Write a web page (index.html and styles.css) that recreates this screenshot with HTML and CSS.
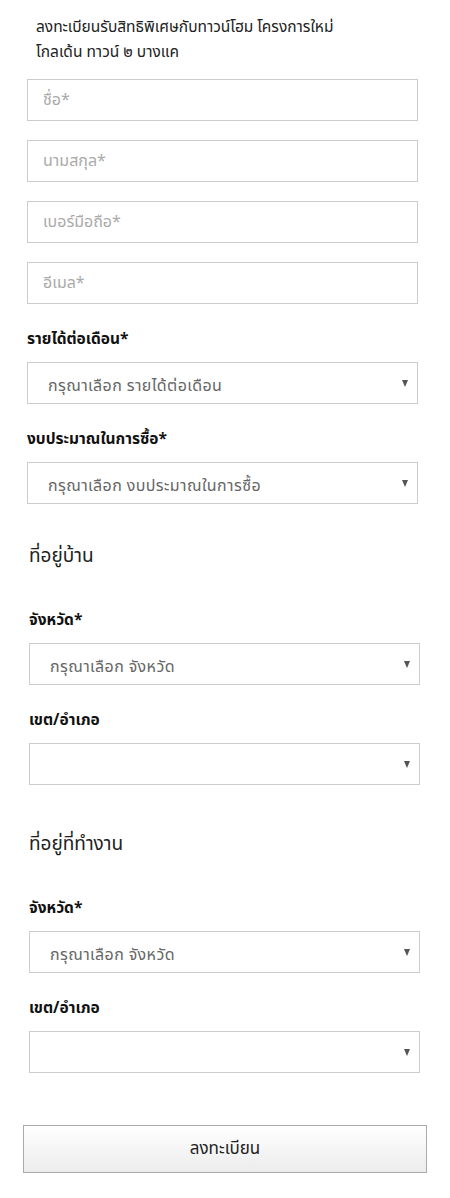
FILE: index.html
```html
<!DOCTYPE html>
<html lang="th">
<head>
    <meta charset="UTF-8">
    <meta name="viewport" content="width=device-width, initial-scale=1.0">
    <title>ลงทะเบียน</title>
    <link rel="stylesheet" href="styles.css">
</head>
<body>
    <div class="register">
        <p class="register-title">ลงทะเบียนรับสิทธิพิเศษกับทาวน์โฮม โครงการใหม่<br>โกลเด้น ทาวน์ ๒ บางแค</p>

        <form id="registerForm">
            <input class="field" type="text" name="name" placeholder="ชื่อ*">
            <input class="field" type="text" name="surname" placeholder="นามสกุล*">
            <input class="field" type="text" name="phone" placeholder="เบอร์มือถือ*">
            <input class="field" type="text" name="email" placeholder="อีเมล*">

            <label class="field-label" for="income">รายได้ต่อเดือน*</label>
            <div class="select-wrap">
                <select id="income" name="income">
                    <option>กรุณาเลือก รายได้ต่อเดือน</option>
                </select>
            </div>

            <label class="field-label" for="budget">งบประมาณในการซื้อ*</label>
            <div class="select-wrap">
                <select id="budget" name="budget">
                    <option>กรุณาเลือก งบประมาณในการซื้อ</option>
                </select>
            </div>

            <div class="address home">
                <h3>ที่อยู่บ้าน</h3>
                <label class="field-label" for="homeProvince">จังหวัด*</label>
                <div class="select-wrap">
                    <select id="homeProvince" name="homeProvince">
                        <option>กรุณาเลือก จังหวัด</option>
                    </select>
                </div>
                <label class="field-label" for="homeDistrict">เขต/อำเภอ</label>
                <div class="select-wrap">
                    <select id="homeDistrict" name="homeDistrict">
                        <option></option>
                    </select>
                </div>
            </div>

            <div class="address work">
                <h3>ที่อยู่ที่ทำงาน</h3>
                <label class="field-label" for="workProvince">จังหวัด*</label>
                <div class="select-wrap">
                    <select id="workProvince" name="workProvince">
                        <option>กรุณาเลือก จังหวัด</option>
                    </select>
                </div>
                <label class="field-label" for="workDistrict">เขต/อำเภอ</label>
                <div class="select-wrap">
                    <select id="workDistrict" name="workDistrict">
                        <option></option>
                    </select>
                </div>
            </div>

            <button type="submit">ลงทะเบียน</button>
        </form>
    </div>
</body>
</html>
```

FILE: styles.css
```css
body {
    margin: 0;
    background: #fff;
    color: #222;
    font-family: "Noto Sans Thai", "Noto Sans", "DejaVu Sans", sans-serif;
}
.register {
    width: 391px;
    margin-left: 27px;
    padding-top: 15px;
}
.register-title {
    margin: 0 0 14px 9px;
    font-size: 15.5px;
    line-height: 25px;
    color: #222;
}
.field {
    display: block;
    box-sizing: border-box;
    width: 100%;
    height: 42px;
    margin: 0 0 19px;
    padding: 0 15px;
    border: 1px solid #ccc;
    font-family: inherit;
    font-size: 16px;
    color: #555;
    background: #fff;
}
.field::placeholder {
    color: #aaa;
}
.field-label {
    display: block;
    margin: 24px 0 10px;
    font-size: 15.5px;
    font-weight: bold;
    line-height: 24px;
    color: #111;
}
.select-wrap {
    position: relative;
    margin-bottom: 24px;
}
.select-wrap select {
    display: block;
    box-sizing: border-box;
    width: 100%;
    height: 42px;
    padding: 6px 30px 0 20px;
    border: 1px solid #ccc;
    border-radius: 0;
    background: #fff;
    font-family: inherit;
    font-size: 16px;
    letter-spacing: 0.4px;
    color: #666;
    -webkit-appearance: none;
    appearance: none;
}
.select-wrap::after {
    content: "";
    position: absolute;
    right: 10px;
    top: 18px;
    border-left: 3px solid transparent;
    border-right: 3px solid transparent;
    border-top: 7px solid #555;
    pointer-events: none;
}
.address {
    width: 391px;
    margin-left: 2px;
}
.address h3 {
    margin: 39px 0 38px;
    font-size: 19px;
    font-weight: normal;
    line-height: 28px;
    color: #222;
}
.address.work h3 {
    margin-top: 46px;
}
.address .field-label {
    margin-top: 0;
}
.register button {
    display: block;
    width: 404px;
    height: 48px;
    margin: 52px 0 0 -4px;
    border: 1px solid #aaa;
    background: linear-gradient(#fff, #ececec);
    font-family: inherit;
    font-size: 17px;
    color: #222;
    cursor: pointer;
}
```
